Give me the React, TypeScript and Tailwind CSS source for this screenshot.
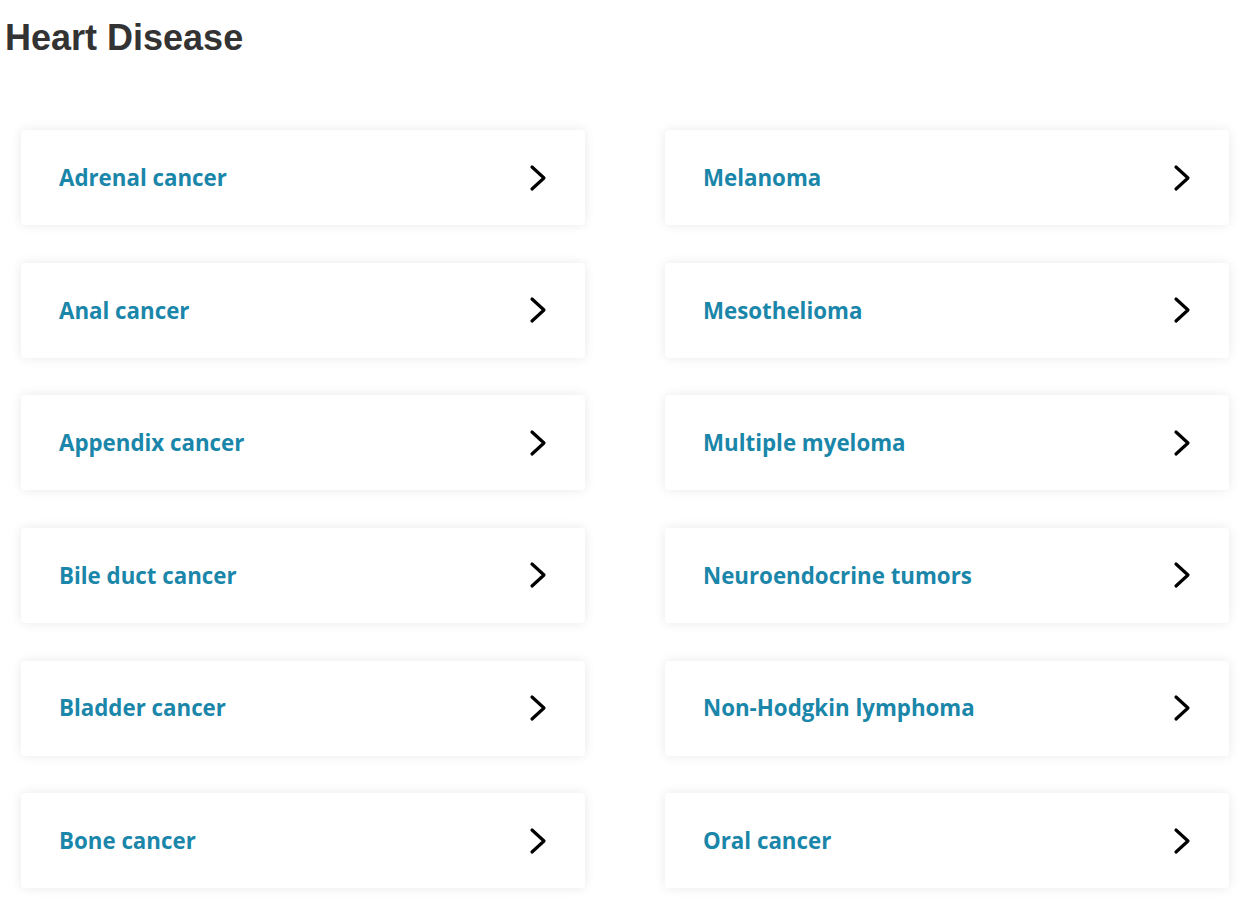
const cancers: string[][] = [
  ["Adrenal cancer", "Melanoma"],
  ["Anal cancer", "Mesothelioma"],
  ["Appendix cancer", "Multiple myeloma"],
  ["Bile duct cancer", "Neuroendocrine tumors"],
  ["Bladder cancer", "Non-Hodgkin lymphoma"],
  ["Bone cancer", "Oral cancer"],
];

function Chevron() {
  return (
    <svg width="18" height="28" viewBox="0 0 18 28" fill="none" className="shrink-0">
      <polyline
        points="3,3 15,14 3,25"
        stroke="#000"
        strokeWidth="3.2"
        strokeLinecap="round"
        strokeLinejoin="round"
      />
    </svg>
  );
}

function CancerCard({ name }: { name: string }) {
  return (
    <a
      href="#"
      className="flex h-[95px] items-center justify-between rounded-[4px] bg-white pl-[38px] pr-[38px] shadow-[0_0_12px_rgba(0,0,0,0.09)]"
    >
      <span className="font-['Open_Sans',sans-serif] text-[22.3px] font-bold text-[#1a86a9]">{name}</span>
      <Chevron />
    </a>
  );
}

export default function App() {
  return (
    <div className="min-h-screen bg-white">
      <h1 className="pl-[5px] pt-[16px] font-['Liberation_Sans',Arial,sans-serif] text-[36px] font-bold leading-[1.2] text-[#333333]">
        Heart Disease
      </h1>

      {/* Cancer types */}
      <div className="mt-[71px] ml-[21px] grid grid-cols-[564px_564px] gap-x-[80px] gap-y-[37.6px]">
        {cancers.flat().map((name) => (
          <CancerCard key={name} name={name} />
        ))}
      </div>
    </div>
  );
}
